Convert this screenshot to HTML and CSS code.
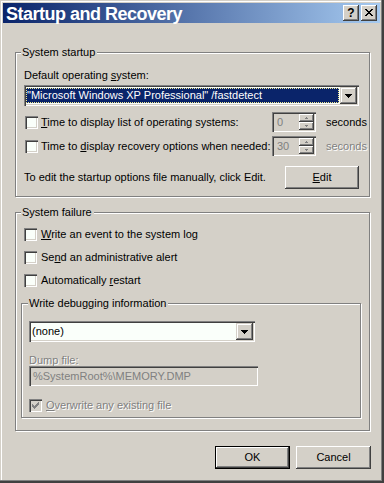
FILE: index.html
```html
<!DOCTYPE html>
<html>
<head>
<meta charset="utf-8">
<title>Startup and Recovery</title>
<link rel="stylesheet" href="styles.css">
</head>
<body>
<div class="window">
  <div class="titlebar">
    <span class="title">Startup and Recovery</span>
    <div class="tbtns">
      <div class="tbtn help">?</div>
      <div class="tbtn close">
        <svg width="8" height="7" viewBox="0 0 8 7" shape-rendering="crispEdges">
          <rect x="0" y="0" width="2" height="1"/><rect x="6" y="0" width="2" height="1"/>
          <rect x="1" y="1" width="2" height="1"/><rect x="5" y="1" width="2" height="1"/>
          <rect x="2" y="2" width="4" height="1"/>
          <rect x="3" y="3" width="2" height="1"/>
          <rect x="2" y="4" width="4" height="1"/>
          <rect x="1" y="5" width="2" height="1"/><rect x="5" y="5" width="2" height="1"/>
          <rect x="0" y="6" width="2" height="1"/><rect x="6" y="6" width="2" height="1"/>
        </svg>
      </div>
    </div>
  </div>

  <div class="client">
    <div class="group g1">
      <div class="legend">System startup</div>
      <div class="label lbl-default">Default operating <u>s</u>ystem:</div>
      <div class="combo combo-os">
        <div class="combo-text sel"><span>"Microsoft Windows XP Professional" /fastdetect</span></div>
        <div class="dropbtn">
          <svg width="7" height="4" viewBox="0 0 7 4" shape-rendering="crispEdges"><rect x="0" y="0" width="7" height="1"/><rect x="1" y="1" width="5" height="1"/><rect x="2" y="2" width="3" height="1"/><rect x="3" y="3" width="1" height="1"/></svg>
        </div>
      </div>

      <div class="spinrow r1">
        <div class="chk"><span class="box"></span><span><u>T</u>ime to display list of operating systems:</span></div>
        <div class="spin">
          <span class="spin-val">0</span>
          <div class="spin-btns">
            <div class="sb"><svg width="3" height="2" viewBox="0 0 3 2" shape-rendering="crispEdges"><rect x="1" y="0" width="1" height="1"/><rect x="0" y="1" width="3" height="1"/></svg></div>
            <div class="sb"><svg width="3" height="2" viewBox="0 0 3 2" shape-rendering="crispEdges"><rect x="0" y="0" width="3" height="1"/><rect x="1" y="1" width="1" height="1"/></svg></div>
          </div>
        </div>
        <span class="unit">seconds</span>
      </div>

      <div class="spinrow r2">
        <div class="chk"><span class="box"></span><span>Time to <u>d</u>isplay recovery options when needed:</span></div>
        <div class="spin">
          <span class="spin-val">30</span>
          <div class="spin-btns">
            <div class="sb"><svg width="3" height="2" viewBox="0 0 3 2" shape-rendering="crispEdges"><rect x="1" y="0" width="1" height="1"/><rect x="0" y="1" width="3" height="1"/></svg></div>
            <div class="sb"><svg width="3" height="2" viewBox="0 0 3 2" shape-rendering="crispEdges"><rect x="0" y="0" width="3" height="1"/><rect x="1" y="1" width="1" height="1"/></svg></div>
          </div>
        </div>
        <span class="unit dis">seconds</span>
      </div>

      <div class="editrow">
        <span>To edit the startup options file manually, click Edit.</span>
        <div class="btn btn-edit"><span><u>E</u>dit</span></div>
      </div>
    </div>

    <div class="group g2">
      <div class="legend">System failure</div>
      <div class="chk crow c1"><span class="box"></span><span><u>W</u>rite an event to the system log</span></div>
      <div class="chk crow c2"><span class="box"></span><span>Se<u>n</u>d an administrative alert</span></div>
      <div class="chk crow c3"><span class="box"></span><span>Automatically <u>r</u>estart</span></div>

      <div class="group g3">
        <div class="legend l3">Write debugging information</div>
        <div class="combo combo-none">
          <div class="combo-text plain">(none)</div>
          <div class="dropbtn">
            <svg width="7" height="4" viewBox="0 0 7 4" shape-rendering="crispEdges"><rect x="0" y="0" width="7" height="1"/><rect x="1" y="1" width="5" height="1"/><rect x="2" y="2" width="3" height="1"/><rect x="3" y="3" width="1" height="1"/></svg>
          </div>
        </div>
        <div class="label dump dis">Dump file:</div>
        <div class="textbox">%SystemRoot%\MEMORY.DMP</div>
        <div class="chk crow c4">
          <span class="box boxdis">
            <svg width="13" height="13" viewBox="0 0 13 13" shape-rendering="crispEdges">
              <rect x="3" y="5" width="1" height="3"/>
              <rect x="4" y="6" width="1" height="3"/>
              <rect x="5" y="7" width="1" height="3"/>
              <rect x="6" y="6" width="1" height="3"/>
              <rect x="7" y="5" width="1" height="3"/>
              <rect x="8" y="4" width="1" height="3"/>
              <rect x="9" y="3" width="1" height="3"/>
            </svg>
          </span>
          <span class="dis"><u>O</u>verwrite any existing file</span>
        </div>
      </div>
    </div>

    <div class="btnrow">
      <div class="default-frame"><div class="btn btn-ok"><span>OK</span></div></div>
      <div class="btn btn-cancel"><span>Cancel</span></div>
    </div>
  </div>
</div>
</body>
</html>
```

FILE: styles.css
```css
* {
  box-sizing: border-box;
}

html, body {
  margin: 0;
  padding: 0;
}

body {
  width: 384px;
  height: 483px;
  overflow: hidden;
  background: #D4D0C8;
  font-family: "Liberation Sans", Arial, sans-serif;
  font-size: 11px;
  line-height: 13px;
  color: #000;
}

u {
  text-decoration: underline;
  text-underline-offset: 1px;
}

.window {
  width: 384px;
  height: 483px;
  background: #D4D0C8;
  padding: 3px 4px 3px 3px;
  box-shadow:
    inset -2px -2px 0 #404040,
    inset -3px -3px 0 #808080,
    inset 1px 1px 0 #D4D0C8,
    inset 2px 2px 0 #FFFFFF;
  display: flex;
  flex-direction: column;
}

/* Title bar */
.titlebar {
  height: 20px;
  flex: none;
  background: linear-gradient(to right, #0A246A, #A6CAF0);
  display: flex;
  justify-content: space-between;
  align-items: flex-start;
  padding-left: 3px;
}

.title {
  color: #FFFFFF;
  font-family: "Liberation Sans", Arial, sans-serif;
  font-weight: bold;
  font-size: 18px;
  letter-spacing: -0.5px;
  line-height: 20px;
  margin-top: 1px;
  white-space: nowrap;
}

.tbtns {
  display: flex;
  gap: 2px;
  margin-top: 2px;
  margin-right: 3px;
}

.tbtn {
  width: 16px;
  height: 16px;
  background: #D4D0C8;
  box-shadow:
    inset -1px -1px 0 #404040,
    inset 1px 1px 0 #FFFFFF,
    inset -2px -2px 0 #808080;
  display: flex;
  align-items: center;
  justify-content: center;
}

.help {
  font-family: "Liberation Sans", Arial, sans-serif;
  font-weight: bold;
  font-size: 12px;
  line-height: 14px;
  padding-bottom: 1px;
}

.close svg {
  fill: #000;
  margin-bottom: 1px;
}

/* Client area */
.client {
  flex: 1;
  display: flex;
  flex-direction: column;
  padding: 0 10px 0 12px;
}

.group {
  border: 1px solid #808080;
  box-shadow: 1px 1px 0 #FFFFFF, inset 1px 1px 0 #FFFFFF;
  display: flex;
  flex-direction: column;
  align-items: flex-start;
}

.legend {
  margin: -7px 0 0 -3px;
  padding: 0 2px 0 1px;
  background: #D4D0C8;
  line-height: 13px;
  white-space: nowrap;
}

.g1 {
  margin-top: 29px;
  padding: 0 10px 7px 8px;
  align-items: stretch;
}

.g1 .legend {
  align-self: flex-start;
}

.lbl-default {
  margin-top: 10px;
}

.combo {
  height: 21px;
  background: #FAFFFA;
  box-shadow:
    inset 1px 1px 0 #808080,
    inset 2px 2px 0 #404040,
    inset -1px -1px 0 #FFFFFF,
    inset -2px -2px 0 #D4D0C8;
  padding: 2px;
  display: flex;
}

.combo-os {
  margin-top: 3px;
}

.combo-text {
  flex: 1;
  display: flex;
  align-items: center;
  white-space: nowrap;
  overflow: hidden;
}

.sel {
  margin: 1px 1px 1px 0;
  background: #0A246A;
  color: #FFFFFF;
  border: 1px dotted #F0E890;
  padding-left: 0;
}

.plain {
  padding-left: 1px;
}

.dropbtn {
  width: 17px;
  height: 17px;
  flex: none;
  background: #D4D0C8;
  box-shadow:
    inset -1px -1px 0 #404040,
    inset 1px 1px 0 #D4D0C8,
    inset -2px -2px 0 #808080,
    inset 2px 2px 0 #FFFFFF;
  display: flex;
  align-items: center;
  justify-content: center;
}

.dropbtn svg {
  fill: #000;
}

/* checkbox */
.chk {
  display: flex;
  align-items: center;
  gap: 4px;
  white-space: nowrap;
}

.box {
  width: 13px;
  height: 13px;
  flex: none;
  background: #FAFFFA;
  box-shadow:
    inset 1px 1px 0 #808080,
    inset 2px 2px 0 #404040,
    inset -1px -1px 0 #FFFFFF,
    inset -2px -2px 0 #D4D0C8;
}

.box svg {
  display: block;
  fill: #808080;
}

.boxdis {
  background: #D4D0C8;
}

/* spin rows */
.spinrow {
  display: grid;
  grid-template-columns: 247px 44px auto;
  align-items: center;
  height: 20px;
  margin-left: 1px;
}

.r1 {
  margin-top: 6px;
}

.r2 {
  margin-top: 4px;
}

.spinrow .chk {
  gap: 3px;
}

.spin {
  width: 44px;
  height: 20px;
  background: #D4D0C8;
  box-shadow:
    inset 1px 1px 0 #808080,
    inset 2px 2px 0 #404040,
    inset -1px -1px 0 #FFFFFF,
    inset -2px -2px 0 #D4D0C8;
  padding: 2px;
  display: flex;
}

.spin-val {
  flex: 1;
  color: #808080;
  padding-left: 3px;
  line-height: 16px;
}

.spin-btns {
  width: 15px;
  display: flex;
  flex-direction: column;
}

.sb {
  flex: 1;
  background: #D4D0C8;
  box-shadow:
    inset -1px -1px 0 #404040,
    inset 1px 1px 0 #FFFFFF,
    inset -2px -2px 0 #808080;
  display: flex;
  align-items: center;
  justify-content: center;
}

.sb svg {
  fill: #808080;
}

.unit {
  margin-left: 10px;
}

.dis {
  color: #808080;
  text-shadow: 1px 1px 0 #FFFFFF;
}

/* edit row */
.editrow {
  margin-top: 10px;
  height: 23px;
  display: flex;
  justify-content: space-between;
  align-items: center;
}

.btn {
  height: 23px;
  background: #D4D0C8;
  box-shadow:
    inset -1px -1px 0 #404040,
    inset 1px 1px 0 #FFFFFF,
    inset -2px -2px 0 #808080;
  display: flex;
  align-items: center;
  justify-content: center;
}

.btn-edit {
  width: 74px;
}

/* group 2 */
.g2 {
  margin-top: 15px;
  padding: 0 0 12px 8px;
}

.crow {
  height: 13px;
}

.c1 {
  margin-top: 9px;
}

.c2, .c3 {
  margin-top: 10px;
}

.g3 {
  margin-top: 16px;
  margin-left: -3px;
  width: 340px;
  padding: 0 0 5px 7px;
}

.l3 {
  margin-left: -1px;
}

.combo-none {
  margin-top: 11px;
  width: 226px;
}

.dump {
  margin-top: 12px;
  line-height: 12px;
}

.textbox {
  width: 229px;
  height: 20px;
  background: #D4D0C8;
  color: #808080;
  box-shadow:
    inset 1px 1px 0 #808080,
    inset 2px 2px 0 #404040,
    inset -1px -1px 0 #FFFFFF,
    inset -2px -2px 0 #D4D0C8;
  padding: 2px 0 0 4px;
  line-height: 16px;
  white-space: nowrap;
}

.c4 {
  margin-top: 13px;
}

/* bottom buttons */
.btnrow {
  margin-top: 15px;
  margin-right: -1px;
  display: flex;
  justify-content: flex-end;
  gap: 6px;
}

.default-frame {
  width: 75px;
  height: 23px;
  border: 1px solid #000;
}

.btn-ok {
  width: 73px;
  height: 21px;
}

.btn-cancel {
  width: 75px;
}
```
